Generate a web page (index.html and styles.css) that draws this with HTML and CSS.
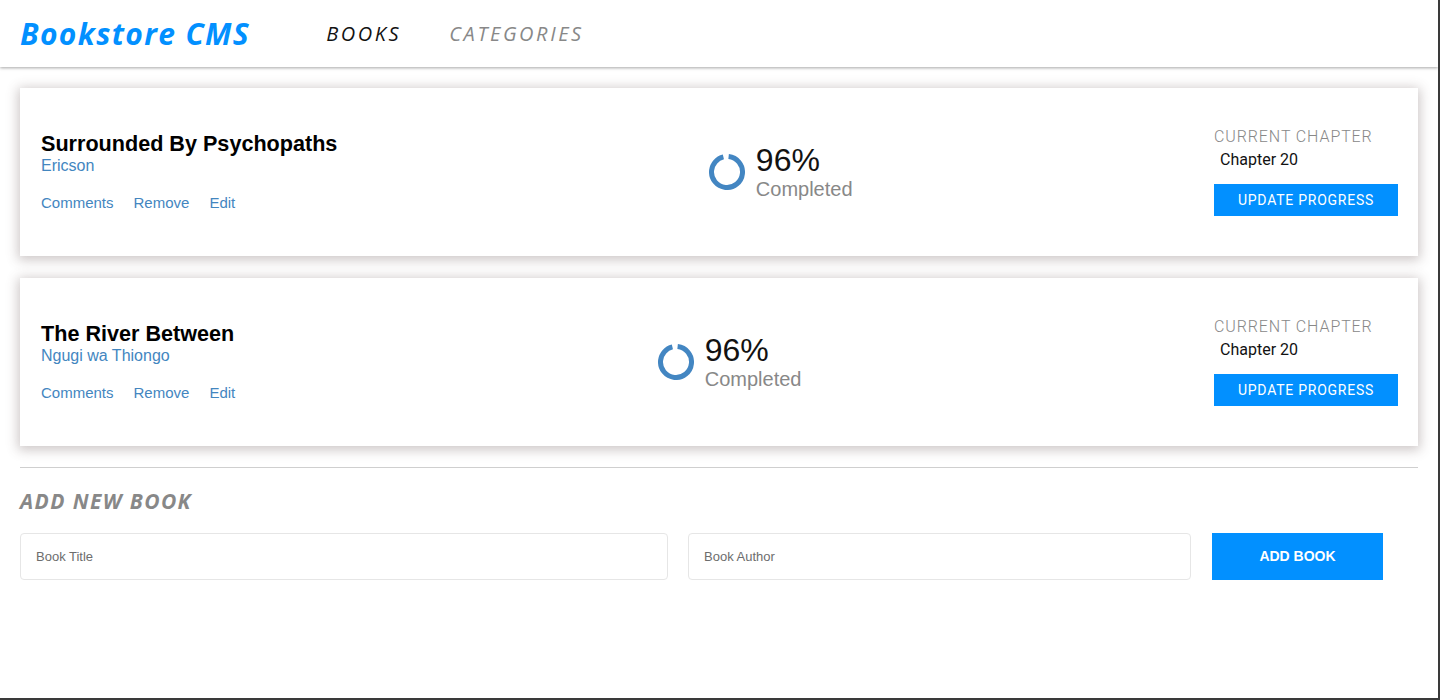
FILE: index.html
```html
<!DOCTYPE html>
<html lang="en">
<head>
<meta charset="utf-8">
<title>Bookstore CMS</title>
<link rel="stylesheet" href="styles.css">
</head>
<body>
<div class="frame">
  <header class="header">
    <a class="logo" href="#">Bookstore CMS</a>
    <nav class="nav">
      <a class="nav-link active" href="#">BOOKS</a>
      <a class="nav-link" href="#">CATEGORIES</a>
    </nav>
  </header>

  <main class="main">
    <ul class="books">
      <li class="card">
        <div class="info">
          <h2 class="title">Surrounded By Psychopaths</h2>
          <p class="author">Ericson</p>
          <div class="actions">
            <button class="action">Comments</button>
            <button class="action">Remove</button>
            <button class="action">Edit</button>
          </div>
        </div>
        <div class="progress">
          <svg class="ring" width="36" height="36" viewBox="0 0 36 36">
            <circle cx="18" cy="18" r="15.5" fill="none" stroke="#4386c2" stroke-width="5" stroke-dasharray="91.5 97.4" transform="rotate(-84 18 18)"/>
          </svg>
          <div class="progress-text">
            <span class="percent">96%</span>
            <span class="completed">Completed</span>
          </div>
        </div>
        <div class="chapter">
          <span class="chapter-label">CURRENT CHAPTER</span>
          <span class="chapter-name">Chapter 20</span>
          <button class="update">UPDATE PROGRESS</button>
        </div>
      </li>
      <li class="card">
        <div class="info">
          <h2 class="title">The River Between</h2>
          <p class="author">Ngugi wa Thiongo</p>
          <div class="actions">
            <button class="action">Comments</button>
            <button class="action">Remove</button>
            <button class="action">Edit</button>
          </div>
        </div>
        <div class="progress">
          <svg class="ring" width="36" height="36" viewBox="0 0 36 36">
            <circle cx="18" cy="18" r="15.5" fill="none" stroke="#4386c2" stroke-width="5" stroke-dasharray="91.5 97.4" transform="rotate(-84 18 18)"/>
          </svg>
          <div class="progress-text">
            <span class="percent">96%</span>
            <span class="completed">Completed</span>
          </div>
        </div>
        <div class="chapter">
          <span class="chapter-label">CURRENT CHAPTER</span>
          <span class="chapter-name">Chapter 20</span>
          <button class="update">UPDATE PROGRESS</button>
        </div>
      </li>
    </ul>

    <hr class="divider">

    <section class="add">
      <h3 class="add-title">ADD NEW BOOK</h3>
      <form class="add-form">
        <input class="field field-title" type="text" placeholder="Book Title">
        <input class="field field-author" type="text" placeholder="Book Author">
        <button class="add-btn" type="button">ADD BOOK</button>
      </form>
    </section>
  </main>
</div>
</body>
</html>
```

FILE: styles.css
```css
* { box-sizing: border-box; }

html, body {
  margin: 0;
  padding: 0;
  background: #3a3a3a;
  height: 700px;
  overflow: hidden;
}

.frame {
  width: 1438px;
  height: 698px;
  background: #fff;
  font-family: "Liberation Sans", Arial, sans-serif;
  overflow: hidden;
}

.header {
  height: 67px;
  display: flex;
  align-items: center;
  padding: 0 20px;
  background: #fff;
  box-shadow: 0 1px 3px rgba(0, 0, 0, 0.35);
  position: relative;
  z-index: 1;
}

.logo {
  font-family: "Open Sans", sans-serif;
  font-weight: 700;
  font-style: italic;
  font-size: 30px;
  letter-spacing: 1.35px;
  color: #0290ff;
  text-decoration: none;
  margin-right: 76px;
}

.nav {
  display: flex;
  gap: 48px;
}

.nav-link {
  font-family: "Open Sans", sans-serif;
  font-style: italic;
  font-size: 20px;
  letter-spacing: 2.6px;
  color: #888;
  text-decoration: none;
}

.nav-link.active { color: #121212; }

.main {
  padding: 21px 20px 0;
}

.books {
  list-style: none;
  margin: 0;
  padding: 0;
  display: flex;
  flex-direction: column;
  gap: 22px;
}

.card {
  height: 168px;
  background: #fff;
  box-shadow: 0 2px 11px 2px rgba(90, 70, 70, 0.3);
  padding: 0 20px 0 21px;
  display: flex;
  align-items: center;
  justify-content: space-between;
}

.info {
  display: flex;
  flex-direction: column;
}

.title {
  margin: -1px 0 1px;
  font-size: 21.6px;
  font-weight: 700;
  line-height: 23px;
  color: #000;
}

.author {
  margin: 0;
  font-size: 16px;
  line-height: 19px;
  color: #4386bf;
}

.actions {
  display: flex;
  gap: 20px;
  margin-top: 19px;
}

.action {
  border: 0;
  background: none;
  padding: 0;
  font-family: "Liberation Sans", Arial, sans-serif;
  font-size: 15px;
  color: #4386bf;
  cursor: pointer;
}

.progress {
  display: flex;
  align-items: center;
  gap: 11px;
  margin-left: 10px;
}

.ring { display: block; }

.progress-text {
  display: flex;
  flex-direction: column;
}

.percent {
  font-size: 32px;
  line-height: 34px;
  color: #121212;
}

.completed {
  font-size: 20px;
  line-height: 24px;
  color: #888;
}

.chapter {
  display: flex;
  flex-direction: column;
  width: 184px;
  font-family: Roboto, sans-serif;
}

.chapter-label {
  font-size: 16px;
  line-height: 19px;
  color: #888;
  letter-spacing: 0.9px;
  font-weight: 300;
  white-space: nowrap;
  margin-top: -1px;
}

.chapter-name {
  font-size: 16px;
  line-height: 19px;
  color: #121212;
  margin: 4px 0 0 6px;
}

.update {
  margin-top: 15px;
  height: 32px;
  width: 184px;
  border: 0;
  background: #0290ff;
  color: #fff;
  font-family: Roboto, sans-serif;
  font-size: 14px;
  letter-spacing: 0.75px;
  cursor: pointer;
}

.divider {
  margin: 21px 0 0;
  border: 0;
  border-top: 1px solid #cfcfcf;
}

.add-title {
  margin: 20px 0 0;
  font-family: "Open Sans", sans-serif;
  font-style: italic;
  font-weight: 700;
  font-size: 21px;
  line-height: 26px;
  letter-spacing: 1.4px;
  color: #888;
}

.add-form {
  display: flex;
  gap: 20px;
  margin-top: 19px;
}

.field {
  height: 47px;
  border: 1px solid #e6e6e6;
  border-radius: 4px;
  padding: 0 15px;
  font-family: "Liberation Sans", Arial, sans-serif;
  font-size: 13px;
  color: #333;
  outline: none;
}

.field::placeholder { color: #6d6d6d; }

.field-title { width: 648px; }
.field-author { width: 503px; }

.add-btn {
  margin-left: 1px;
  width: 171px;
  height: 47px;
  padding: 0 0 2px;
  border: 0;
  background: #0290ff;
  color: #fff;
  font-family: "Liberation Sans", Arial, sans-serif;
  font-weight: 700;
  font-size: 14px;
  cursor: pointer;
}
```
